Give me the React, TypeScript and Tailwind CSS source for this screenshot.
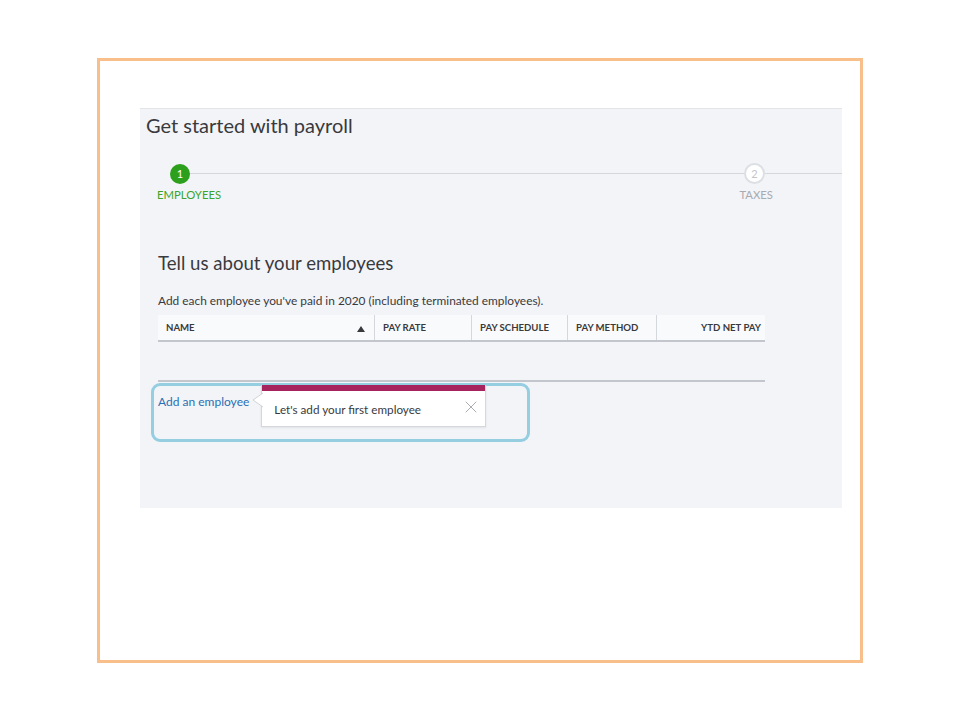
import { X } from "lucide-react";

const columns = [
  { label: "PAY RATE", width: "w-[97px]" },
  { label: "PAY SCHEDULE", width: "w-[96px]" },
  { label: "PAY METHOD", width: "w-[89px]" },
];

export default function App() {
  return (
    <div className="w-[960px] h-[720px] bg-white pt-[58px] pl-[97px] font-['Lato','Open_Sans',sans-serif]">
      <div className="w-[766px] h-[605px] border-[3px] border-[#f9bf8b] pl-[40px] pt-[47px]">
        <section className="w-[702px] h-[400px] bg-[#f3f4f8] border-t border-[#e2e4e8]">
          <h1 className="pl-[6px] pt-[4px] text-[20px] leading-[24px] text-[#393a3d]">
            Get started with payroll
          </h1>

          {/* stepper */}
          <div className="mt-[26px] flex items-center pl-[30px]">
            <div className="w-[20px] h-[20px] rounded-full bg-[#2ca01c] text-white text-[11px] leading-none flex items-center justify-center">
              1
            </div>
            <div className="flex-1 h-px bg-[#d4d7dc]" />
            <div className="w-[21px] h-[21px] rounded-full bg-white border-2 border-[#dcdfe3] text-[#c3c6cb] text-[11px] leading-none flex items-center justify-center">
              2
            </div>
            <div className="w-[77px] h-px bg-[#d4d7dc]" />
          </div>
          <div className="mt-[4px] flex text-[11.3px] leading-[14px]">
            <span className="pl-[17px] text-[#3aa52a]">EMPLOYEES</span>
            <span className="ml-auto mr-[69px] text-[#a7aab0]">TAXES</span>
          </div>

          <main className="pl-[18px]">
            <h2 className="mt-[49px] text-[18.6px] leading-[24px] text-[#393a3d]">
              Tell us about your employees
            </h2>
            <p className="mt-[18px] text-[11.9px] leading-[16px] text-[#393a3d]">
              Add each employee you've paid in 2020 (including terminated employees).
            </p>

            <div className="mt-[6px] w-[607px]">
              <div className="flex h-[27px] bg-[#f9fafb] border-b-2 border-[#c3c6cc] text-[9.6px] font-bold text-[#393a3d]">
                <div className="w-[216px] flex items-center justify-between pl-[8px] pr-[9px] pt-[2px]">
                  <span>NAME</span>
                  <svg width="8" height="6" viewBox="0 0 8 6">
                    <path d="M0 6 L4 0 L8 6 Z" fill="#393a3d" />
                  </svg>
                </div>
                {columns.map((c) => (
                  <div
                    key={c.label}
                    className={`${c.width} border-l border-[#d4d7dc] flex items-center pl-[8px] pt-[2px]`}
                  >
                    {c.label}
                  </div>
                ))}
                <div className="flex-1 border-l border-[#d4d7dc] flex items-center justify-end pr-[4px] pt-[2px]">
                  YTD NET PAY
                </div>
              </div>
              <div className="h-[40px] border-b-2 border-[#c3c6cc]" />
            </div>

            <div className="mt-[1px] -ml-[7px] w-[379px] h-[59px] border-[3px] border-[#94cee0] rounded-[9px] flex items-start pl-[4px]">
              <a className="mt-[9px] text-[12px] leading-[14px] text-[#2a6fb5]">Add an employee</a>
              <div className="relative -mt-[1px] ml-[12px] w-[225px] bg-white border border-[#d4d7dc] border-t-0 shadow-[0_1px_2px_rgba(0,0,0,0.08)]">
                <svg
                  className="absolute left-[-10px] top-[7px]"
                  width="11"
                  height="16"
                  viewBox="0 0 11 16"
                >
                  <path d="M11 1 L1 8 L11 15" fill="white" stroke="#cfd2d7" strokeWidth="1" />
                </svg>
                <div className="h-[6px] bg-[#a6235e]" />
                <div className="flex items-center justify-between pl-[12px] pr-[4px] pt-[9px] pb-[9px]">
                  <span className="text-[11.7px] leading-[14px] text-[#393a3d]">
                    Let's add your first employee
                  </span>
                  <X size={20} strokeWidth={1.2} className="text-[#a9acb1] -mt-[3px]" />
                </div>
              </div>
            </div>
          </main>
        </section>
      </div>
    </div>
  );
}
